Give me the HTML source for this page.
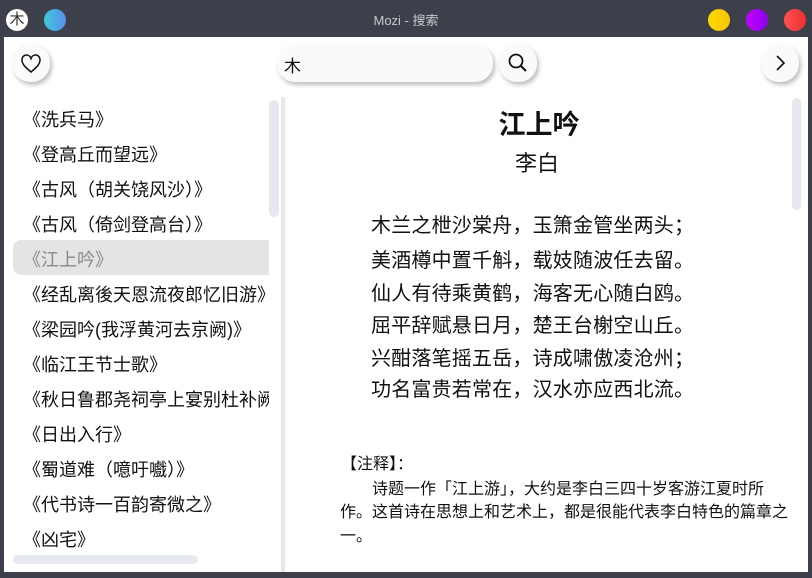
<!DOCTYPE html>
<html><head><meta charset="utf-8"><style>
*{margin:0;padding:0;box-sizing:border-box}
body{width:812px;height:578px;background:#3d3f4a;font-family:"Liberation Sans","Noto Sans CJK SC",sans-serif;position:relative;overflow:hidden}
.abs{position:absolute}
.title{left:0;top:10px;width:812px;text-align:center;color:#c8c8cc;font-size:13px}
.dot{width:22px;height:22px;border-radius:50%;top:9px}
.main{left:4px;top:37px;width:804px;height:535px;background:#fff}
.btn{background:#fafafa;border-radius:18px;box-shadow:2px 3px 4px rgba(0,0,0,.25)}
.li{position:absolute;left:23px;font-size:18px;color:#111;white-space:nowrap;line-height:20px}
.poem{left:371px;font-size:20px;color:#111;line-height:20px;letter-spacing:0.2px;white-space:nowrap}
.note{font-size:16px;color:#111;line-height:20px;white-space:nowrap;font-family:"Liberation Sans","WenQuanYi Zen Hei",sans-serif}
</style></head><body>
<div class="abs dot" style="left:6px;background:#fff;color:#333;font-size:15px;text-align:center;line-height:22px">木</div>
<div class="abs dot" style="left:44px;background:linear-gradient(90deg,#3ec9d6,#5b8ef0)"></div>
<div class="abs title">Mozi - 搜索</div>
<div class="abs dot" style="left:708px;background:linear-gradient(90deg,#ffd700,#f7c600)"></div>
<div class="abs dot" style="left:746px;background:linear-gradient(90deg,#c000ff,#9000f0)"></div>
<div class="abs dot" style="left:784px;background:linear-gradient(90deg,#ff5050,#f03030)"></div>
<div class="abs main"></div>
<div class="abs btn" style="left:12px;top:44px;width:38px;height:38px"><svg width="38" height="38" viewBox="0 0 38 38"><path d="M19 28 C13 23 10 20 10 16 C10 13 12 11 14.5 11 C17 11 18.5 13 19 14.5 C19.5 13 21 11 23.5 11 C26 11 28 13 28 16 C28 20 25 23 19 28Z" fill="none" stroke="#111" stroke-width="1.5"/></svg></div>
<div class="abs btn" style="left:277px;top:44px;width:216px;height:38px"><span class="abs" style="left:7px;top:8px;font-size:17px;color:#111">木</span></div>
<div class="abs btn" style="left:499px;top:44px;width:38px;height:38px"><svg width="38" height="38" viewBox="0 0 38 38"><circle cx="17" cy="17" r="6.5" fill="none" stroke="#111" stroke-width="1.8"/><path d="M21.5 21.5 L27 27" stroke="#111" stroke-width="2"/></svg></div>
<div class="abs btn" style="left:761px;top:44px;width:38px;height:38px"><svg width="38" height="38" viewBox="0 0 38 38"><path d="M16 12 L23 19 L16 26" fill="none" stroke="#111" stroke-width="1.6"/></svg></div>
<div class="abs" style="left:13px;top:240px;width:256px;height:35px;background:#e4e4e4;border-radius:8px 0 0 8px"></div>
<div class="abs" style="left:269px;top:100px;width:10px;height:117px;background:#e6e8ee;border-radius:5px"></div>
<div class="abs" style="left:281px;top:97px;width:4px;height:475px;background:#e8e8e8"></div>
<div class="abs" style="left:13px;top:555px;width:185px;height:9px;background:#e6e9f2;border-radius:5px"></div>
<div class="abs" style="left:792px;top:98px;width:9px;height:112px;background:#e6e8ee;border-radius:5px"></div>
<div class="abs" style="left:13px;top:97px;width:256px;height:456px;overflow:hidden">
<div class="li" style="left:10px;top:13px">《洗兵马》</div>
<div class="li" style="left:10px;top:48px">《登高丘而望远》</div>
<div class="li" style="left:10px;top:83px">《古风（胡关饶风沙）》</div>
<div class="li" style="left:10px;top:118px">《古风（倚剑登高台）》</div>
<div class="li" style="left:10px;top:153px;color:#888">《江上吟》</div>
<div class="li" style="left:10px;top:188px">《经乱离後天恩流夜郎忆旧游》</div>
<div class="li" style="left:10px;top:223px">《梁园吟(我浮黄河去京阙)》</div>
<div class="li" style="left:10px;top:258px">《临江王节士歌》</div>
<div class="li" style="left:10px;top:293px">《秋日鲁郡尧祠亭上宴别杜补阙》</div>
<div class="li" style="left:10px;top:328px">《日出入行》</div>
<div class="li" style="left:10px;top:363px">《蜀道难（噫吁嚱）》</div>
<div class="li" style="left:10px;top:398px">《代书诗一百韵寄微之》</div>
<div class="li" style="left:10px;top:433px">《凶宅》</div>
</div>
<div class="abs" style="left:439px;top:110px;width:200px;text-align:center;font-size:27px;font-weight:bold;color:#111;line-height:30px">江上吟</div>
<div class="abs" style="left:437px;top:151px;width:200px;text-align:center;font-size:22px;color:#111;line-height:26px">李白</div>
<div class="abs poem" style="top:216px">木兰之枻沙棠舟，玉箫金管坐两头；</div>
<div class="abs poem" style="top:251px">美酒樽中置千斛，载妓随波任去留。</div>
<div class="abs poem" style="top:284px">仙人有待乘黄鹤，海客无心随白鸥。</div>
<div class="abs poem" style="top:316px">屈平辞赋悬日月，楚王台榭空山丘。</div>
<div class="abs poem" style="top:349px">兴酣落笔摇五岳，诗成啸傲凌沧州；</div>
<div class="abs poem" style="top:380px">功名富贵若常在，汉水亦应西北流。</div>
<div class="abs note" style="left:341px;top:455px">【注释】：</div>
<div class="abs note" style="left:372px;top:480px">诗题一作「江上游」，大约是李白三四十岁客游江夏时所</div>
<div class="abs note" style="left:340px;top:503px">作。这首诗在思想上和艺术上，都是很能代表李白特色的篇章之</div>
<div class="abs note" style="left:340px;top:527px">一。</div>
</body></html>
